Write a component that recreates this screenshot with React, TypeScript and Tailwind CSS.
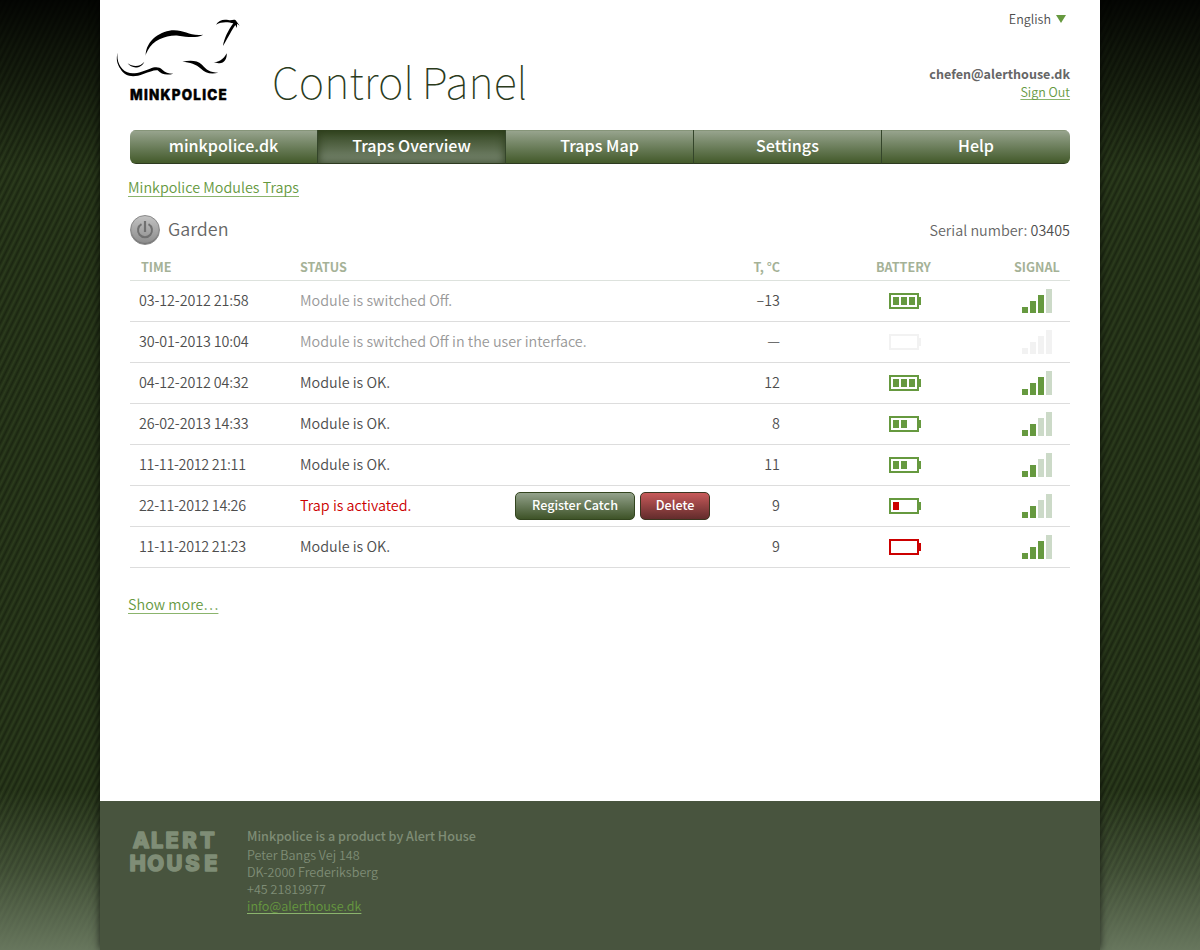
import type { ReactNode } from "react";

type Tone = "green" | "red" | "off";
type Row = {
  time: string;
  status: string;
  kind: "ok" | "muted" | "alert";
  temp: string;
  battery: number;
  batteryTone: Tone;
  signal: number;
};

const rows: Row[] = [
  { time: "03-12-2012 21:58", status: "Module is switched Off.", kind: "muted", temp: "–13", battery: 3, batteryTone: "green", signal: 3 },
  { time: "30-01-2013 10:04", status: "Module is switched Off in the user interface.", kind: "muted", temp: "—", battery: 0, batteryTone: "off", signal: 0 },
  { time: "04-12-2012 04:32", status: "Module is OK.", kind: "ok", temp: "12", battery: 3, batteryTone: "green", signal: 3 },
  { time: "26-02-2013 14:33", status: "Module is OK.", kind: "ok", temp: "8", battery: 2, batteryTone: "green", signal: 2 },
  { time: "11-11-2012 21:11", status: "Module is OK.", kind: "ok", temp: "11", battery: 2, batteryTone: "green", signal: 2 },
  { time: "22-11-2012 14:26", status: "Trap is activated.", kind: "alert", temp: "9", battery: 1, batteryTone: "green", signal: 2 },
  { time: "11-11-2012 21:23", status: "Module is OK.", kind: "ok", temp: "9", battery: 0, batteryTone: "red", signal: 3 },
];

const statusColor = { ok: "text-[#4d4d4d]", muted: "text-[#999999]", alert: "text-[#cc0000]" };
const batteryColor = { green: "#66993f", red: "#cc0000", off: "#f2f2f2" };

function Battery({ level, tone }: { level: number; tone: Tone }) {
  const c = batteryColor[tone];
  return (
    <svg width="32" height="16" viewBox="0 0 32 16" shapeRendering="crispEdges">
      <rect x="1" y="1" width="28" height="14" fill="none" stroke={c} strokeWidth="2" />
      <rect x="30" y="4" width="2" height="8" fill={c} />
      {Array.from({ length: level }, (_, i) => (
        <rect key={i} x={4 + i * 8} y="4" width="6" height="8" fill={level === 1 ? "#cc0000" : c} />
      ))}
    </svg>
  );
}

function Signal({ level }: { level: number }) {
  return (
    <svg width="30" height="24" viewBox="0 0 30 24" shapeRendering="crispEdges">
      {[0, 1, 2, 3].map((i) => (
        <rect
          key={i}
          x={i * 8}
          y={18 - i * 6}
          width="6"
          height={6 + i * 6}
          fill={level === 0 ? "#f2f2f2" : i < level ? "#66993f" : "#ccdac8"}
        />
      ))}
    </svg>
  );
}

function MinkLogo() {
  return (
    <svg width="160" height="120" viewBox="0 0 480 360">
      <path d="M137 168C137 120 185 91 222 91C255 91 270 109 310 104C285 116 262 110 235 107C200 104 160 120 144 150C140 158 137 163 137 168Z" />
      <path d="M53 158C49 180 60 208 82 217C102 225 130 214 150 206C165 200 177 200 187 209C195 217 205 221 220 221C200 227 183 223 173 211C163 209 150 215 130 222C100 234 75 230 62 208C50 190 48 175 53 158Z" />
      <path d="M83 190C100 202 122 200 133 185C125 206 95 208 83 190Z" />
      <path d="M247 185C270 181 290 180 306 194C319 209 330 217 355 218C330 224 315 217 303 206C288 192 270 187 247 185Z" />
      <path d="M334 189C355 188 372 178 380 160C382 178 370 194 352 189C345 188 340 189 334 189Z" />
      <path d="M348 74C356 60 370 57 385 60C395 62 402 57 407 61L419 77L411 71L411 84L406 75C397 87 385 112 369 138C372 116 385 90 400 70C385 66 365 64 348 74Z" />
      <text x="90" y="299" fontFamily="Inter, sans-serif" fontWeight="800" fontSize="42" letterSpacing="4" textLength="294" lengthAdjust="spacingAndGlyphs" stroke="#000" strokeWidth="1.5" strokeLinejoin="round">
        MINKPOLICE
      </text>
    </svg>
  );
}

function AlertHouseLogo() {
  return (
    <svg className="overflow-visible" width="90" height="42" viewBox="0 0 90 42" fill="#7f8d76" stroke="#7f8d76" strokeWidth="1.4" strokeLinejoin="round" fontFamily="Inter, sans-serif" fontWeight="800" fontSize="21.8">
      <text x="3.7 22 36.6 53.2 71" y="17.4">ALERT</text>
      <text x="0.4 18.2 37.4 56.2 75.2" y="40.2">HOUSE</text>
    </svg>
  );
}

function PowerButton() {
  return (
    <button className="flex size-[30px] items-center justify-center rounded-full border border-[#8a8a8a] bg-linear-to-b from-[#c2c2c2] to-[#8c8c8c] shadow-[inset_0_-1px_1px_#707070]">
      <svg className="-mt-[1px]" width="18" height="20" viewBox="0 0 18 20" fill="none" stroke="#707070" strokeWidth="2" strokeLinecap="butt">
        <path d="M5.5 4.2A7 7 0 1 0 12.5 4.2" />
        <path d="M9 1V12" strokeWidth="2.2" />
      </svg>
    </button>
  );
}

function Link({ children, tight }: { children: ReactNode; tight?: boolean }) {
  return (
    <a
      className={
        "text-[#66993f] underline decoration-[#8bb46d] decoration-1 [text-decoration-skip-ink:none] " +
        (tight ? "underline-offset-2" : "underline-offset-[3px]")
      }
      href="#"
    >
      {children}
    </a>
  );
}

function Nav() {
  const items = ["minkpolice.dk", "Traps Overview", "Traps Map", "Settings", "Help"];
  return (
    <nav className="mx-[30px] flex h-[34px] overflow-hidden rounded-md">
      {items.map((t, i) => (
        <a
          key={t}
          href="#"
          className={
            "flex w-[188px] items-center justify-center border-b border-[#2d3a20] pb-[3px] text-[16.1px] font-medium text-white " +
            (i === 1
              ? "bg-linear-to-b from-[#33451f] to-[#7c8a74] shadow-[inset_0_0_8px_#2c3c1c]"
              : "bg-linear-to-b from-[#9aa691] to-[#435a2a] shadow-[inset_0_1px_0_#869579]") +
            (i < 4 ? " border-r border-r-[#34452a]" : "")
          }
        >
          {t}
        </a>
      ))}
    </nav>
  );
}

export default function App() {
  return (
    <div className="h-[950px] w-[1200px] overflow-hidden bg-[linear-gradient(180deg,rgba(0,0,0,0.9)_0px,rgba(0,0,0,0.6)_50px,transparent_170px,transparent_790px,rgba(107,122,97,0.4)_870px,rgba(107,122,97,0.95)_950px),repeating-linear-gradient(116.6deg,#1b2611_0px,#2c3c1d_2.68px,#1b2611_5.366px)] px-[100px] font-['Noto_Sans_CJK_SC',sans-serif] text-[14.37px] font-[350] text-[#4d4d4d]">
      <div className="flex h-full flex-col bg-white shadow-[0_0_8px_rgba(0,0,0,0.7)]">
        <header className="flex h-[130px] shrink-0 justify-between pr-[30px]">
          <div className="flex">
            <MinkLogo />
            <h1 className="pl-[12px] pt-[45px] text-[43.3px] leading-[70px] font-thin text-[#2b3b1c] [word-spacing:-2px]">Control Panel</h1>
          </div>
          <div className="flex flex-col items-end text-[12.55px] leading-[18px]">
            <div className="flex items-center gap-[5px] pr-1 pt-[10px]">
              English
              <svg width="10" height="8" viewBox="0 0 10 8" fill="#66993f"><path d="M0 0H10L5 8Z" /></svg>
            </div>
            <b className="mt-[37px] text-[#666666]">chefen@alerthouse.dk</b>
            <div><Link tight>Sign Out</Link></div>
          </div>
        </header>
        <Nav />
        <main className="flex-1 px-[30px]">
          <div className="-ml-[2px] pt-[14px] leading-[18px]"><Link>Minkpolice Modules Traps</Link></div>
          <div className="mt-[18px] flex h-[32px] items-center">
            <PowerButton />
            <h2 className="-mt-[3px] ml-2 flex-1 text-[17.9px] text-[#666666]">Garden</h2>
            <div><span className="text-[#666666]">Serial number:</span> 03405</div>
          </div>
          <div className="flex h-[35px] items-center border-b border-[#dde2dd] pt-[9px] text-[12.6px] font-bold text-[#a5b297]">
            <div className="w-[170px] pl-[11px]">TIME</div>
            <div className="w-[410px]">STATUS</div>
            <div className="w-[70px] text-right">T, °C</div>
            <div className="w-[234px] pl-[96px]">BATTERY</div>
            <div>SIGNAL</div>
          </div>
          {rows.map((r) => (
            <div key={r.time} className="flex h-[41px] items-center border-b border-[#dddddd]">
              <div className={"w-[170px] pb-[2px] pl-[9px] " + (r.time.includes("11-2") ? "tracking-[-0.3px]" : "tracking-[-0.12px]")}>{r.time}</div>
              <div className={"flex-1 pb-[2px] " + statusColor[r.kind]}>{r.status}</div>
              {r.kind === "alert" && (
                <div className="flex gap-[5px] text-[12.6px] font-medium text-white">
                  <button className="h-[28px] w-[120px] rounded-[5px] border border-[#33451f] bg-linear-to-b from-[#94a28c] to-[#3e5327] pb-[2px]">Register Catch</button>
                  <button className="h-[28px] w-[70px] rounded-[5px] border border-[#3c3520] bg-linear-to-b from-[#c85a5a] to-[#632c2c] pb-[2px]">Delete</button>
                </div>
              )}
              <div className="w-[70px] pb-[2px] text-right">{r.temp}</div>
              <div className="w-[242px] pl-[109px]"><Battery level={r.battery} tone={r.batteryTone} /></div>
              <div className="w-[48px]"><Signal level={r.signal} /></div>
            </div>
          ))}
          <div className="-ml-[2px] pt-[27px] leading-[18px]"><Link>Show more…</Link></div>
        </main>
        <footer className="flex h-[149px] shrink-0 bg-[#48543e] pl-[29px] pt-[30px] text-[12.6px] text-[#7f8d76]">
          <AlertHouseLogo />
          <div className="-mt-[4px] pl-[28px] leading-[17px]">
            <div className="mb-[2px] font-medium">Minkpolice is a product by Alert House</div>
            <div>Peter Bangs Vej 148</div>
            <div>DK-2000 Frederiksberg</div>
            <div>+45 21819977</div>
            <div><Link tight>info@alerthouse.dk</Link></div>
          </div>
        </footer>
      </div>
    </div>
  );
}
